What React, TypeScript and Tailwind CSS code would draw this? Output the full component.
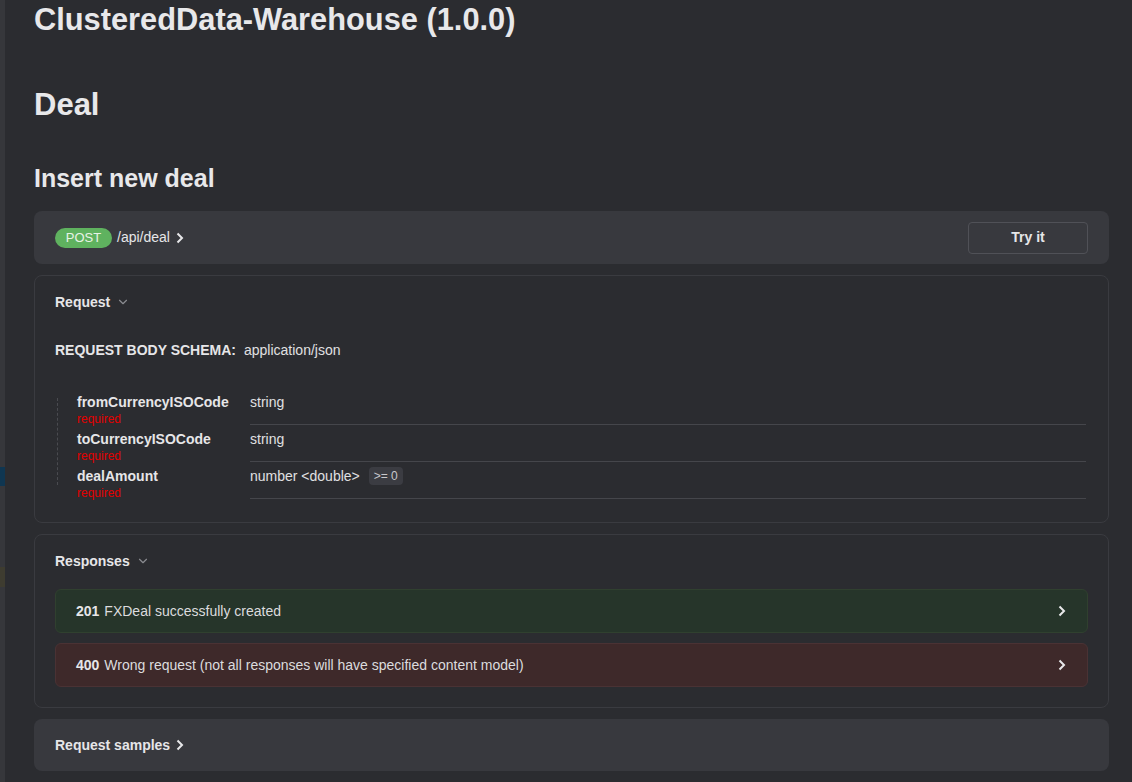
import { ChevronDown } from "lucide-react";

const font = { fontFamily: '"Liberation Sans", Arial, sans-serif' };

const fields = [
  { name: "fromCurrencyISOCode", type: "string" },
  { name: "toCurrencyISOCode", type: "string" },
  { name: "dealAmount", type: "number <double>", min: ">= 0" },
];

function Chevron({ className = "ml-1.5" }: { className?: string }) {
  return (
    <svg width="8" height="12" viewBox="0 0 8 12" className={className}>
      <path d="M1.5 1.5 L6 6 L1.5 10.5" fill="none" stroke="#e8e8ea" strokeWidth="2" />
    </svg>
  );
}

export default function App() {
  return (
    <div
      className="flex h-[782px] w-[1132px] overflow-hidden bg-[#2b2c30] text-[#e6e6e8]"
      style={font}
    >
      {/* sidebar edge */}
      <div className="flex w-[5px] shrink-0 flex-col bg-[#36373b]">
        <div className="h-[467px]" />
        <div className="h-[19px] bg-[#0f3651]" />
        <div className="h-[81px]" />
        <div className="h-[20px] bg-[#3e3c30]" />
      </div>

      <div className="flex-1 pl-[29px] pr-[23px]">
        <h1 className="-mt-[2px] text-[30.8px] font-bold leading-[44px] text-[#e8e8ea]">
          ClusteredData-Warehouse (1.0.0)
        </h1>
        <h2 className="mt-[41px] text-[31px] font-bold leading-[44px] text-[#e8e8ea]">Deal</h2>
        <h3 className="mt-[34px] text-[25px] font-bold leading-[34px] text-[#e8e8ea]">
          Insert new deal
        </h3>

        {/* operation bar */}
        <div className="mt-[16px] flex h-[53px] items-center rounded-lg bg-[#38393e] pl-[21px] pr-[21px]">
          <span className="flex h-[20px] w-[57px] items-center justify-center rounded-full bg-[#5fb25f] text-[13px] text-[#e8f3e6]">
            POST
          </span>
          <span className="ml-[5px] text-[14px] text-[#e6e6e8]">/api/deal</span>
          <Chevron />
          <button className="ml-auto h-[32px] w-[120px] rounded-[4px] border border-[#505157] text-[14px] font-bold text-[#e6e6e8]">
            Try it
          </button>
        </div>

        {/* request */}
        <div className="mt-[11px] rounded-lg border border-[#3a3b40] pb-[23px] pl-[20px] pr-[22px] pt-[16px]">
          <div className="flex h-[20px] items-center text-[14px] font-bold text-[#e6e6e8]">
            Request
            <ChevronDown size={14} className="ml-1.5 text-[#8a8b90]" strokeWidth={2} />
          </div>
          <div className="mt-[28px] flex h-[20px] items-center text-[14px]">
            <span className="font-bold text-[#e6e6e8]">REQUEST BODY SCHEMA:</span>
            <span className="ml-[8px] text-[#e0e0e2]">application/json</span>
          </div>

          <div className="relative mt-[28px]">
            <div className="absolute left-[2px] top-[10px] h-[87px] border-l border-dashed border-[#4a4b50]" />
            {fields.map((f) => (
              <div key={f.name} className="flex h-[37px]">
                <div className="w-[195px] shrink-0 pl-[22px] pt-[5px]">
                  <div className="text-[14px] font-bold leading-[18px] text-[#e6e6e8]">{f.name}</div>
                  <div className="mt-[1px] text-[12px] leading-[14px] text-[#e30000]">required</div>
                </div>
                <div className="flex flex-1 items-start border-b border-[#45464b] pt-[5px]">
                  <span className="text-[14px] leading-[18px] text-[#e0e0e2]">{f.type}</span>
                  {f.min && (
                    <span className="ml-[9px] rounded-[4px] bg-[#3b3c42] px-[5px] text-[12px] leading-[18px] text-[#c8c8cc]">
                      {f.min}
                    </span>
                  )}
                </div>
              </div>
            ))}
          </div>
        </div>

        {/* responses */}
        <div className="mt-[11px] rounded-lg border border-[#3a3b40] pb-[20px] pl-[20px] pr-[20px] pt-[16px]">
          <div className="flex h-[20px] items-center text-[14px] font-bold text-[#e6e6e8]">
            Responses
            <ChevronDown size={14} className="ml-1.5 text-[#8a8b90]" strokeWidth={2} />
          </div>
          <div className="mt-[18px] flex h-[44px] items-center rounded-md border border-[#30402f] bg-[#26352a] pl-[20px] pr-[21px] text-[14px]">
            <span className="font-bold text-[#e6e6e8]">201</span>
            <span className="ml-[5px] text-[#dcdcde]">FXDeal successfully created</span>
            <Chevron className="ml-auto" />
          </div>
          <div className="mt-[10px] flex h-[44px] items-center rounded-md border border-[#4a3234] bg-[#3e292a] pl-[20px] pr-[21px] text-[14px]">
            <span className="font-bold text-[#e6e6e8]">400</span>
            <span className="ml-[5px] text-[#dcdcde]">
              Wrong request (not all responses will have specified content model)
            </span>
            <Chevron className="ml-auto" />
          </div>
        </div>

        {/* request samples */}
        <div className="mt-[11px] flex h-[52px] items-center rounded-lg bg-[#38393e] pl-[21px] text-[14px] font-bold text-[#e6e6e8]">
          Request samples
          <Chevron />
        </div>
      </div>
    </div>
  );
}
